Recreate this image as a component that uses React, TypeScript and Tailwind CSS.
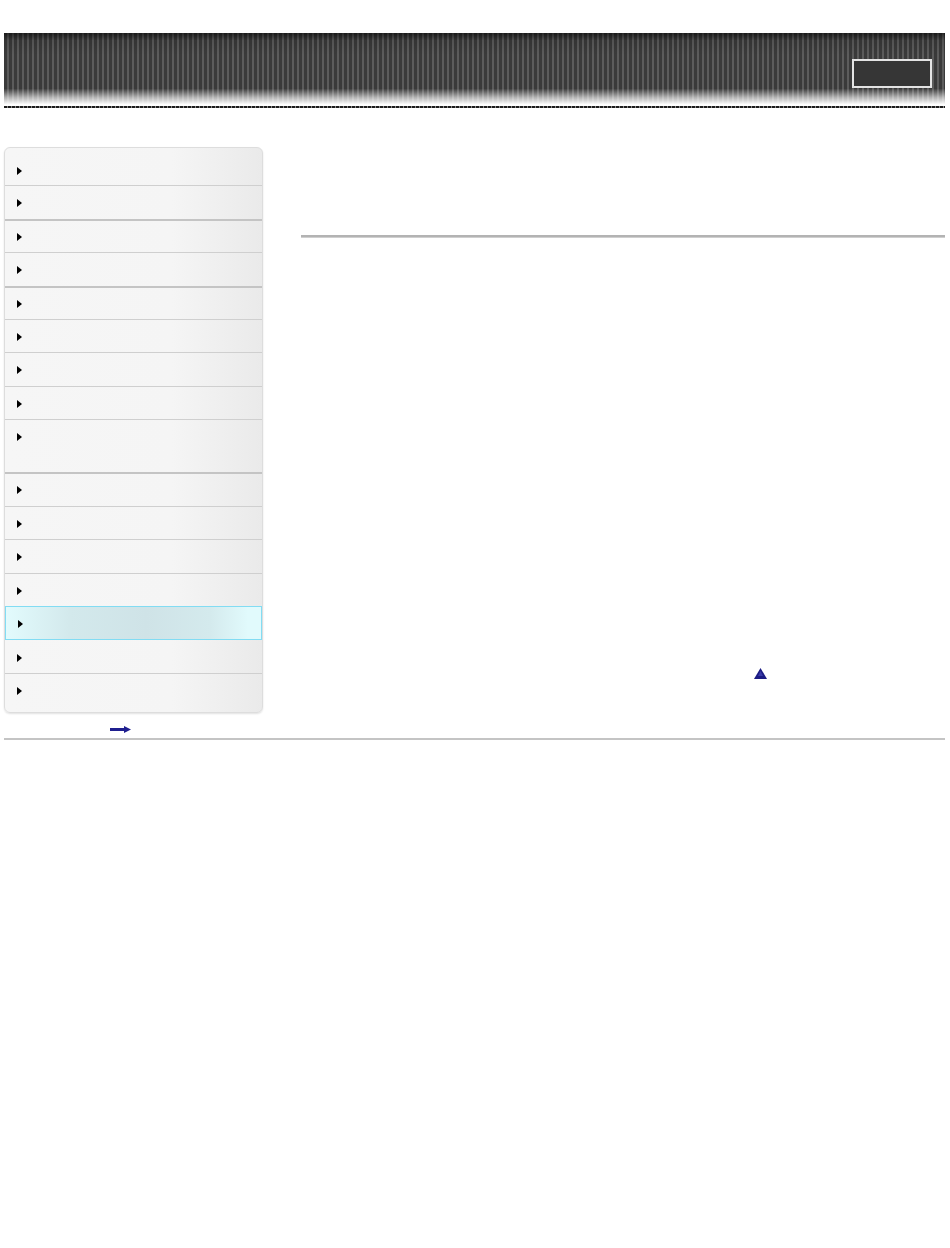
import React from 'react';

type Sep = 'none' | 'thin' | 'thick' | 'hl';

const navRows: Array<{ h: string; sep: Sep }> = [
  { h: 'h-[32px]', sep: 'none' },
  { h: 'h-[34px]', sep: 'thin' },
  { h: 'h-[33px]', sep: 'thick' },
  { h: 'h-[34px]', sep: 'thin' },
  { h: 'h-[33px]', sep: 'thick' },
  { h: 'h-[33px]', sep: 'thin' },
  { h: 'h-[34px]', sep: 'thin' },
  { h: 'h-[33px]', sep: 'thin' },
  { h: 'h-[53px]', sep: 'thin' },
  { h: 'h-[34px]', sep: 'thick' },
  { h: 'h-[33px]', sep: 'thin' },
  { h: 'h-[34px]', sep: 'thin' },
  { h: 'h-[33px]', sep: 'thin' },
  { h: 'h-[34px]', sep: 'hl' },
  { h: 'h-[33px]', sep: 'none' },
  { h: 'h-[34px]', sep: 'thin' },
];

const sepClass: Record<Sep, string> = {
  none: 'pt-[14px]',
  thin: 'border-t border-[#cfcfcf] pt-[13px]',
  thick: 'border-t-2 border-[#c4c4c4] pt-[12px]',
  hl: 'border border-[#82dcf3] pt-[13px] bg-[linear-gradient(90deg,#e2fbfd_0%,#d3e9ec_25%,#cfe3e7_55%,#d4eaed_80%,#e1fafc_95%)]',
};

function NavRow({ h, sep }: { h: string; sep: Sep }) {
  return (
    <div className={`${h} ${sepClass[sep]} pl-[12px] flex items-start`}>
      <span className="block w-0 h-0 border-y-[4px] border-y-transparent border-l-[5px] border-l-black" />
    </div>
  );
}

export default function App() {
  return (
    <div className="w-[950px] min-h-[1248px] bg-white font-['Liberation_Sans',Arial,sans-serif]">
      {/* Banner */}
      <div className="pt-[33px] pl-[4px] pr-[5px]">
        <div className="h-[73px] flex justify-end items-start pt-[26px] pr-[13px] bg-[linear-gradient(180deg,rgba(0,0,0,0.55)_0%,rgba(0,0,0,0.1)_10%,rgba(0,0,0,0)_30%,rgba(0,0,0,0)_76%,rgba(255,255,255,0.6)_88%,#ffffff_98%),repeating-linear-gradient(90deg,#3a3a3a_0px,#3a3a3a_3px,#5c5c5c_3px,#5c5c5c_5px)]">
          <div className="w-[80px] h-[29px] bg-[#363636] border-2 border-[#e4e4e4]" />
        </div>
        <div className="h-[2px] bg-[repeating-linear-gradient(90deg,#1c1c1c_0px,#1c1c1c_3px,#8a8a8a_3px,#8a8a8a_4px)]" />
      </div>

      {/* Body */}
      <div className="flex pl-[4px] pr-[5px] pt-[39px]">
        <div className="w-[259px] shrink-0">
          <nav className="rounded-[6px] overflow-hidden border border-[#dddddd] shadow-[0_1px_2px_rgba(0,0,0,0.12)] py-[5px] bg-[linear-gradient(90deg,#f6f6f6_0%,#f5f5f5_65%,#eaeaea_100%)]">
            {navRows.map((row, i) => (
              <NavRow key={i} h={row.h} sep={row.sep} />
            ))}
          </nav>
          <div className="pl-[106px] pt-[13px] h-[25px]">
            <svg width="22" height="7" viewBox="0 0 22 7">
              <rect x="0" y="2" width="15" height="3" fill="#1f1f8f" />
              <polygon points="14,0 21,3.5 14,7" fill="#1f1f8f" />
            </svg>
          </div>
        </div>

        <main className="flex-1 pl-[38px] pt-[88px]">
          <div className="h-[3px] bg-[#b3b3b3] border-b border-[#cfcfcf]" />
          <div className="pl-[453px] pt-[430px]">
            <svg width="13" height="11" viewBox="0 0 13 11">
              <polygon points="6.5,0 13,11 0,11" fill="#1c1c84" />
              <polygon points="6.5,3 9,8 4,8" fill="#3a3aa8" />
            </svg>
          </div>
        </main>
      </div>

      <div className="ml-[4px] mr-[5px] h-[2px] bg-[#c4c4c4]" />
    </div>
  );
}
